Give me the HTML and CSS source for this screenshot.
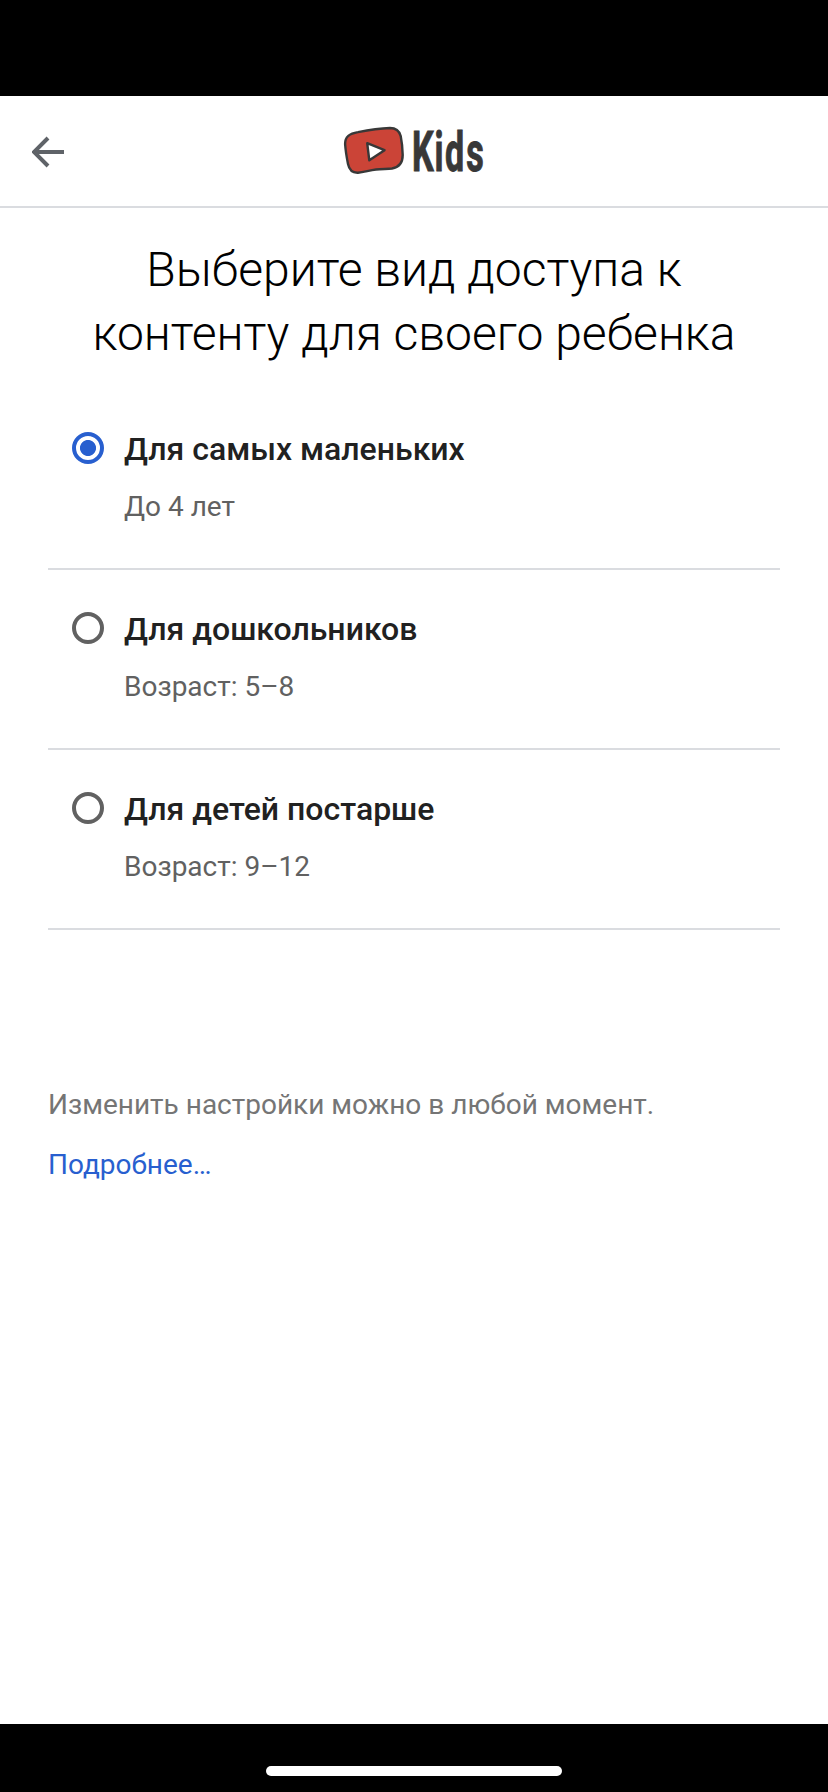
FILE: index.html
```html
<!DOCTYPE html>
<html lang="ru">
<head>
<meta charset="utf-8">
<title>YouTube Kids</title>
<link rel="stylesheet" href="styles.css">
</head>
<body>
<div class="screen">
  <div class="status-bar"></div>
  <header class="header">
    <svg class="back" viewBox="0 0 32 32" role="img" aria-label="Назад">
      <path d="M32 16H3M16 2L2 16l14 14"/>
    </svg>
    <svg class="logo" viewBox="-2 -1 144 52" role="img" aria-label="YouTube Kids">
      <path class="logo-badge" d="M14 6.1C25 3.9 36 2.3 46 2C52 2 55.300 5 56.700 10C57.900 16 58.600 23 58.700 29C58.700 37 55 41.300 48 42.500C43 43.100 38 42.800 32 43.500C25 44.400 20 46.200 14 46.700C8 47 5.200 43.700 4 38C2.800 32 1.500 24 1.100 18C1 10.500 5.500 7.600 14 6.100Z"/>
      <path class="logo-play" d="M23.200 17.200L40.500 24.200L25.300 34.300Z"/>
      <text class="logo-text" transform="translate(67.500 45) scale(.62 1)" x="0.800 37 54 88.500">Kids</text>
    </svg>
  </header>
  <main class="content">
    <h1 class="title">Выберите вид доступа к<br>контенту для своего ребенка</h1>
    <div class="options" role="radiogroup">
      <div class="option" role="radio" aria-checked="true">
        <span class="radio radio-on"></span>
        <div class="option-text"><div class="option-title">Для самых маленьких</div><div class="option-sub">До 4 лет</div></div>
      </div>
      <div class="option" role="radio" aria-checked="false">
        <span class="radio"></span>
        <div class="option-text"><div class="option-title">Для дошкольников</div><div class="option-sub">Возраст: 5–8</div></div>
      </div>
      <div class="option" role="radio" aria-checked="false">
        <span class="radio"></span>
        <div class="option-text"><div class="option-title">Для детей постарше</div><div class="option-sub">Возраст: 9–12</div></div>
      </div>
    </div>
    <p class="note">Изменить настройки можно в любой момент.</p>
    <a class="more">Подробнее…</a>
  </main>
  <div class="home-area"><div class="home-bar"></div></div>
</div>
</body>
</html>
```
FILE: styles.css
```css
* { box-sizing: border-box; }
body { margin: 0; font-family: Roboto, "Noto Sans", sans-serif; background: #fff; }
.screen { display: flex; flex-direction: column; width: 828px; height: 1792px; }
.status-bar { height: 96px; flex: none; background: #000; }
.header {
  display: grid;
  grid-template-columns: 1fr auto 1fr;
  align-items: center;
  height: 112px;
  flex: none;
  padding: 0 32px;
  border-bottom: 2px solid #dadce0;
}
.back { width: 32px; height: 32px; margin-top: 2px; fill: none; stroke: #5f6368; stroke-width: 4; }
.logo { width: 144px; height: 52px; overflow: visible; }
.logo-badge { fill: #cb4437; stroke: #383838; stroke-width: 2.4; }
.logo-play { fill: #fff; stroke: #383838; stroke-width: 2.4; stroke-linejoin: round; }
.logo-text { font-size: 55px; font-weight: 700; fill: #383838; stroke: #383838; stroke-width: 1; }
.content { flex: 1; padding: 30px 48px 0; }
.title { margin: 0; font-size: 48px; line-height: 64px; font-weight: 300; text-align: center; color: #000; white-space: nowrap; }
.options { padding-top: 24px; }
.option { display: flex; gap: 20px; height: 180px; padding: 42px 24px 0; border-bottom: 2px solid #dadce0; }
.radio { width: 32px; height: 32px; flex: none; border: 4px solid #616161; border-radius: 50%; }
.radio-on { border-color: #285fcf; background: radial-gradient(circle, #285fcf 7.600px, #fff 8.400px); }
.option-text { margin-top: -3px; white-space: nowrap; }
.option-title { font-size: 32px; line-height: 40px; font-weight: 500; color: #212121; }
.option-sub { margin-top: 22px; font-size: 28px; line-height: 32px; color: #616161; }
.note { margin: 159px 0 0; font-size: 28px; line-height: 32px; color: #757575; }
.more { display: block; margin-top: 28px; font-size: 28px; line-height: 32px; color: #285fcf; }
.home-area { height: 68px; flex: none; padding-top: 42px; background: #000; }
.home-bar { width: 296px; height: 10px; margin: 0 auto; border-radius: 5px; background: #fff; }
```
